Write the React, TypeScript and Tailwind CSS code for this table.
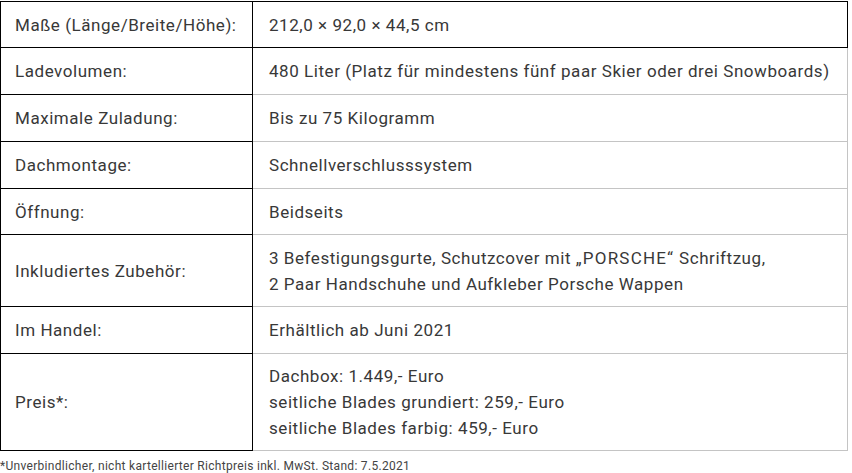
import React from "react";

const rows: { label: string; value: React.ReactNode; h: string; dark?: boolean }[] = [
  { label: "Maße (Länge/Breite/Höhe):", value: "212,0 × 92,0 × 44,5 cm", h: "h-[46px]", dark: true },
  { label: "Ladevolumen:", value: "480 Liter (Platz für mindestens fünf paar Skier oder drei Snowboards)", h: "h-[47px]" },
  { label: "Maximale Zuladung:", value: "Bis zu 75 Kilogramm", h: "h-[47px]" },
  { label: "Dachmontage:", value: "Schnellverschlusssystem", h: "h-[47px]" },
  { label: "Öffnung:", value: "Beidseits", h: "h-[46px]" },
  {
    label: "Inkludiertes Zubehör:",
    value: (
      <>
        3 Befestigungsgurte, Schutzcover mit <span className="tracking-[1.2px]">„PORSCHE“</span> Schriftzug,
        <br />2 Paar Handschuhe und Aufkleber Porsche Wappen
      </>
    ),
    h: "h-[72px]",
  },
  { label: "Im Handel:", value: "Erhältlich ab Juni 2021", h: "h-[47px]" },
  {
    label: "Preis*:",
    value: (
      <>
        Dachbox: 1.449,- Euro
        <br />
        seitliche Blades grundiert: 259,- Euro
        <br />
        seitliche Blades farbig: 459,- Euro
      </>
    ),
    h: "h-[97px]",
  },
];

export default function App() {
  return (
    <div className="w-[852px] h-[473px] bg-white text-[#383838] font-['Roboto',sans-serif] overflow-hidden">
      <table className="mt-px border-collapse w-[848px] text-[17px] leading-[26px] tracking-[0.55px]">
        <tbody>
          {rows.map((r, i) => (
            <tr key={i} className={r.h}>
              <td className="w-[252px] border border-black pl-[14px] align-middle">{r.label}</td>
              <td
                className={
                  "border pl-[16px] align-middle " + (r.dark ? "border-black" : "border-[#c4c4c4]")
                }
              >
                {r.value}
              </td>
            </tr>
          ))}
        </tbody>
      </table>
      <div className="mt-[8px] text-[12px] leading-[14px] tracking-[0.3px] text-[#444]">
        *Unverbindlicher, nicht kartellierter Richtpreis inkl. MwSt. Stand: 7.5.2021
      </div>
    </div>
  );
}
